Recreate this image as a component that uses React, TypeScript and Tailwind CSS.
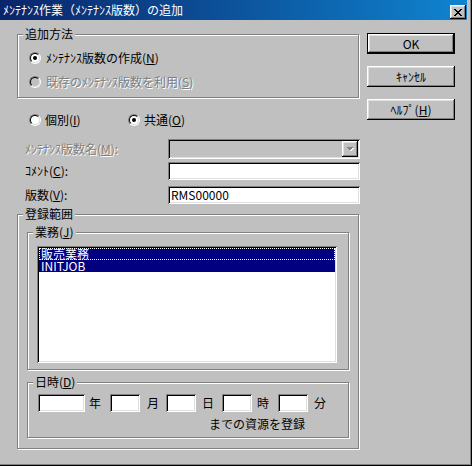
import React from "react";

// classic 3D bevels
const raised =
  "shadow-[inset_-1px_-1px_0_#000,inset_1px_1px_0_#fff,inset_-2px_-2px_0_#808080,inset_2px_2px_0_#dfdfdf]";
const sunken =
  "shadow-[inset_1px_1px_0_#808080,inset_-1px_-1px_0_#fff,inset_2px_2px_0_#000,inset_-2px_-2px_0_#dfdfdf]";
const etched = "border border-[#808080] shadow-[inset_1px_1px_0_#fff,1px_1px_0_#fff]";
const grayed = "text-[#808080] [text-shadow:1px_1px_0_#fff]";

function Key({ children }: { children: React.ReactNode }) {
  return <span className="underline underline-offset-1">{children}</span>;
}

function Radio({ checked = false, disabled = false }: { checked?: boolean; disabled?: boolean }) {
  return (
    <span className="w-[12px] h-[12px] shrink-0 flex rounded-full border border-t-[#808080] border-l-[#808080] border-r-white border-b-white">
      <span
        className={`flex-1 flex items-center justify-center rounded-full border border-t-black border-l-black border-r-[#dfdfdf] border-b-[#dfdfdf] ${
          disabled ? "bg-[#c0c0c0]" : "bg-white"
        }`}
      >
        {checked && <span className="w-[4px] h-[4px] rounded-full bg-black" />}
      </span>
    </span>
  );
}

function Group({ label, className = "", children }: { label: React.ReactNode; className?: string; children: React.ReactNode }) {
  return (
    <div className={`relative ${etched} ${className}`}>
      <span className="absolute left-[5px] -top-[7px] bg-[#c0c0c0] px-[2px] leading-[12px] whitespace-nowrap">{label}</span>
      {children}
    </div>
  );
}

function Field({ className = "", children }: { className?: string; children?: React.ReactNode }) {
  return <div className={`bg-white h-[18px] flex items-center pl-[3px] ${sunken} ${className}`}>{children}</div>;
}

function Button({ children, isDefault = false }: { children: React.ReactNode; isDefault?: boolean }) {
  return (
    <div
      className={`w-[88px] h-[21px] flex items-center justify-center ${isDefault ? "border border-black" : ""} ${raised}`}
    >
      {children}
    </div>
  );
}

export default function App() {
  return (
    <div className="w-[472px] h-[466px] overflow-hidden bg-[#c0c0c0] shadow-[inset_-1px_-1px_0_#000,inset_-2px_-2px_0_#808080] font-['Noto_Sans_CJK_JP',sans-serif] text-[12px] leading-[12px] text-black">
      {/* title bar */}
      <div className="w-[467px] h-[20px] flex bg-linear-to-r from-[#0a246a] to-[#1084d0] pl-[3px]">
        <span className="flex-1 self-center text-white whitespace-nowrap">ﾒﾝﾃﾅﾝｽ作業（ﾒﾝﾃﾅﾝｽ版数）の追加</span>
        <div className={`w-[16px] h-[14px] mt-[5px] mr-[1px] bg-[#c0c0c0] flex items-center justify-center ${raised}`}>
          <svg width="8" height="7" viewBox="0 0 8 7" shapeRendering="crispEdges">
            <path
              d="M0 0h2v1H0zM6 0h2v1H6zM1 1h2v1H1zM5 1h2v1H5zM2 2h4v1H2zM3 3h2v1H3zM2 4h4v1H2zM1 5h2v1H1zM5 5h2v1H5zM0 6h2v1H0zM6 6h2v1H6z"
              fill="#000"
            />
          </svg>
        </div>
      </div>

      <div className="flex pl-[17px]">
        {/* left column */}
        <div className="w-[343px] pt-[14px]">
          <Group label="追加方法" className="w-[342px] h-[64px] pt-[17px] pl-[11px]">
            <div className="flex items-center h-[12px]">
              <Radio checked />
              <span className="ml-[5px]">
                ﾒﾝﾃﾅﾝｽ版数の作成(<Key>N</Key>)
              </span>
            </div>
            <div className="flex items-center h-[12px] mt-[12px]">
              <Radio disabled />
              <span className={`ml-[5px] ${grayed}`}>
                既存のﾒﾝﾃﾅﾝｽ版数を利用(<Key>S</Key>)
              </span>
            </div>
          </Group>

          <div className="flex items-center h-[12px] mt-[16px] pl-[12px]">
            <Radio />
            <span className="ml-[4px] w-[83px]">
              個別(<Key>I</Key>)
            </span>
            <Radio checked />
            <span className="ml-[4px]">
              共通(<Key>O</Key>)
            </span>
          </div>

          <div className="flex items-center h-[20px] mt-[13px]">
            <span className={`w-[151px] pl-[8px] ${grayed}`}>
              ﾒﾝﾃﾅﾝｽ版数名(<Key>M</Key>):
            </span>
            <div className={`w-[192px] h-[20px] flex justify-end p-[2px] bg-[#c0c0c0] ${sunken}`}>
              <div className={`w-[16px] h-full flex items-center justify-center bg-[#c0c0c0] ${raised}`}>
                <svg width="8" height="5" viewBox="0 0 8 5" shapeRendering="crispEdges">
                  <path d="M1 1h7L4.5 4.5z" fill="#fff" />
                  <path d="M0 0h7L3.5 3.5z" fill="#808080" />
                </svg>
              </div>
            </div>
          </div>

          <div className="flex items-center h-[18px] mt-[3px]">
            <span className="w-[151px] pl-[8px]">
              ｺﾒﾝﾄ(<Key>C</Key>):
            </span>
            <Field className="w-[192px]" />
          </div>

          <div className="flex items-center h-[18px] mt-[6px]">
            <span className="w-[151px] pl-[8px]">
              版数(<Key>V</Key>):
            </span>
            <Field className="w-[192px]">RMS00000</Field>
          </div>

          <Group label="登録範囲" className="w-[342px] h-[235px] mt-[10px] pt-[17px] pl-[9px]">
            <Group
              label={
                <>
                  業務(<Key>J</Key>)
                </>
              }
              className="w-[322px] h-[138px] pt-[13px] pl-[9px]"
            >
              <div className={`w-[300px] h-[117px] bg-white p-[2px] ${sunken}`}>
                <div className="h-[12px] flex items-center px-[2px] bg-[#000080] text-white outline-1 outline-dotted outline-white -outline-offset-1">
                  販売業務
                </div>
                <div className="h-[12px] flex items-center px-[2px] bg-[#000080] text-white">INITJOB</div>
              </div>
            </Group>

            <Group
              label={
                <>
                  日時(<Key>D</Key>)
                </>
              }
              className="w-[322px] h-[56px] mt-[12px] pt-[11px] pl-[10px]"
            >
              <div className="flex items-center h-[18px]">
                <Field className="w-[47px]" />
                <span className="ml-[4px]">年</span>
                <Field className="w-[30px] ml-[9px]" />
                <span className="ml-[7px]">月</span>
                <Field className="w-[30px] ml-[7px]" />
                <span className="ml-[6px]">日</span>
                <Field className="w-[30px] ml-[8px]" />
                <span className="ml-[5px]">時</span>
                <Field className="w-[30px] ml-[9px]" />
                <span className="ml-[6px]">分</span>
              </div>
              <div className="mt-[6px] ml-[171px]">までの資源を登録</div>
            </Group>
          </Group>
        </div>

        {/* buttons */}
        <div className="ml-[7px] pt-[13px] flex flex-col gap-[12px]">
          <Button isDefault>OK</Button>
          <Button>ｷｬﾝｾﾙ</Button>
          <Button>
            ﾍﾙﾌﾟ(<Key>H</Key>)
          </Button>
        </div>
      </div>
    </div>
  );
}
